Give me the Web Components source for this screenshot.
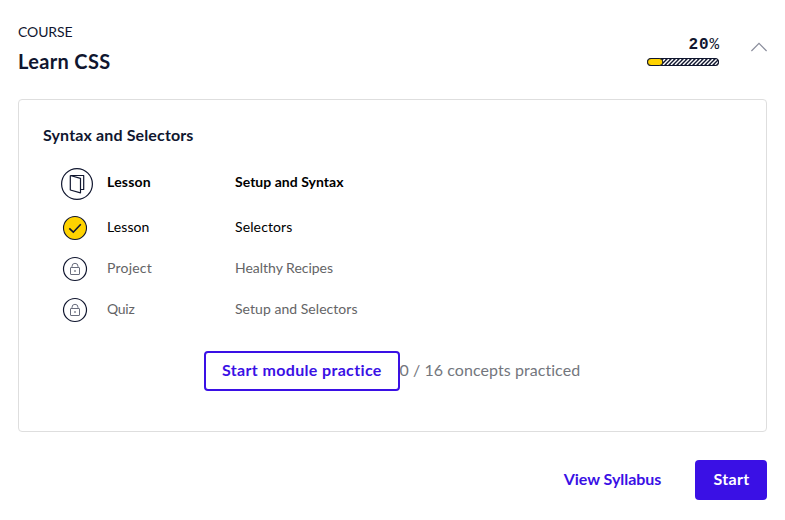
<!DOCTYPE html>
<html lang="en">
<head>
<meta charset="utf-8">
<title>Learn CSS</title>
<style>
body{margin:0;background:#fff;color:#10162f;font-family:Lato,"Open Sans",sans-serif}
</style>
</head>
<body>
<course-page></course-page>
<script>
const define = (name, html, setup) => customElements.define(name, class extends HTMLElement {
  connectedCallback() {
    if (this.shadowRoot) return;
    this.attachShadow({mode: 'open'}).innerHTML = html;
    if (setup) setup(this, this.shadowRoot);
  }
});

/* A single line of text whose tracking is spread over the measure in "w". */
define('fit-text', `<style>
:host{display:block;white-space:nowrap}
span{display:inline-block}
</style><span><slot></slot></span>`, (el, root) => {
  const span = root.querySelector('span');
  const width = Number(el.getAttribute('w'));
  const count = el.textContent.length;
  span.style.letterSpacing = (width - span.getBoundingClientRect().width) / count + 'px';
  el.style.width = width + 'px';
});

define('progress-meter', `<style>
:host{display:flex;flex-direction:column;align-items:flex-end;width:72px}
.value{font:700 16px/20px "Liberation Mono",monospace;padding-top:1px;margin:0 -1px 3px 0}
.value b{font-weight:400}
svg{display:block}
</style>
<div class="value"><fit-text w="31.5">20<b>%</b></fit-text></div>
<svg width="72" height="8" viewBox="0 0 72 8">
<defs><pattern id="hatch" width="4" height="6" patternUnits="userSpaceOnUse" y="1">
<rect width="4" height="6" fill="#10162f"/><path d="M-4 6L2 0M0 6L6 0M-8 6L-2 0M4 6L10 0" stroke="#fff" stroke-width="1.5"/></pattern></defs>
<rect x=".5" y=".5" width="71" height="7" rx="3.5" fill="url(#hatch)" stroke="#10162f" stroke-width="1.2"/>
<rect x=".5" y=".5" width="15.3" height="7" rx="3.5" fill="#ffd300" stroke="#10162f"/>
</svg>`);

define('status-icon', `<style>
:host{display:flex;justify-content:center;width:28px}
:host([kind=book]){width:32px}
svg{display:none;overflow:visible;fill:none;stroke:#10162f}
:host([kind=book]) .book,:host([kind=check]) .check,:host([kind=lock]) .lock{display:block}
</style>
<svg class="book" width="32" height="32"><circle cx="16" cy="16" r="15.4" stroke-width="1.2"/>
<path d="M9.3 7.5H22.7V21.5H19.6M9.3 7.5V22L19.5 24.8V10.3L9.3 7.5" stroke-width="1.2" stroke-linejoin="round"/></svg>
<svg class="check" width="24" height="24"><circle cx="12" cy="12" r="11.5" fill="#ffd300" stroke-width="1.1"/>
<path d="M6.3 12.4L10.3 16.2L17.8 8.2" stroke-width="1.6"/></svg>
<svg class="lock" width="24" height="24"><circle cx="12" cy="12" r="11.5" stroke-width="1.2"/>
<g stroke="#6a6e7e"><rect x="7.5" y="10.5" width="9" height="7" rx=".4"/><path d="M9 10.5V9.3A3 3 0 0 1 15 9.3V10.5"/><path d="M12 13.2V14.8" stroke-width="1.6"/></g></svg>`);

define('content-row', `<style>
:host{display:grid;grid-template-columns:46px 128px 1fr;height:41px;align-items:center;color:#000;font-size:14px;line-height:20px}
::slotted(fit-text){padding-bottom:2px}
:host([current]){height:48px;margin-bottom:-1px;font-weight:700}
:host([current]) ::slotted(fit-text){padding-bottom:4px}
:host([locked]){color:#646466}
</style><slot></slot>`);

define('action-button', `<style>
:host{display:flex;box-sizing:border-box;height:40px;align-items:center;justify-content:center;border:2px solid transparent;border-radius:4px;color:#3a10e5;font-size:16px;font-weight:700;line-height:24px;padding:0 0 2px 1px}
:host([outline]){border-color:#3a10e5}
:host([solid]){background:#3a10e5;color:#fff}
</style><slot></slot>`);

define('course-header', `<style>
:host{display:flex;justify-content:space-between;height:77px}
.course{font-size:14px;line-height:20px}
.name{font-size:20px;line-height:26px;font-weight:700;margin-top:6px}
.side{display:flex;gap:32px;padding-top:12px}
.side svg{margin-top:8px}
</style>
<div class="title"><div class="course"><fit-text w="54.5">COURSE</fit-text></div>
<div class="name"><fit-text w="92.5">Learn CSS</fit-text></div></div>
<div class="side"><progress-meter></progress-meter>
<svg width="16" height="10" viewBox="0 0 16 10" fill="none" stroke="#898c9b" stroke-width="1.2"><path d="M.4 9L8 1.4L15.6 9"/></svg></div>`);

define('module-card', `<style>
:host{display:block;box-sizing:border-box;height:333px;border:1px solid #dedede;border-radius:4px;padding:23px 24px}
.heading{font-size:16px;line-height:24px;font-weight:700}
.rows{padding:13px 0 0 18px}
.practice{display:flex;align-items:center;justify-content:center;margin-top:21px;padding-right:1px}
.practice action-button{width:196px}
.count{font-size:16px;line-height:24px;color:#73767d;padding-bottom:2px}
</style>
<div class="heading"><fit-text w="150.5">Syntax and Selectors</fit-text></div>
<div class="rows">
<content-row current><status-icon kind="book"></status-icon><fit-text w="44">Lesson</fit-text><fit-text w="108.5">Setup and Syntax</fit-text></content-row>
<content-row><status-icon kind="check"></status-icon><fit-text w="42.5">Lesson</fit-text><fit-text w="57.5">Selectors</fit-text></content-row>
<content-row locked><status-icon kind="lock"></status-icon><fit-text w="45">Project</fit-text><fit-text w="98">Healthy Recipes</fit-text></content-row>
<content-row locked><status-icon kind="lock"></status-icon><fit-text w="27.5">Quiz</fit-text><fit-text w="122.5">Setup and Selectors</fit-text></content-row>
</div>
<div class="practice"><action-button outline><fit-text w="160">Start module practice</fit-text></action-button><fit-text class="count" w="181">0 / 16 concepts practiced</fit-text></div>`);

define('course-page', `<style>
:host{display:block;box-sizing:border-box;width:785px;height:520px;padding:22px 18px 0;background:#fff}
footer{display:flex;justify-content:flex-end;gap:16px;margin-top:28px}
.view{width:134px}.start{width:72px}
</style>
<course-header></course-header>
<module-card></module-card>
<footer><action-button class="view"><fit-text w="97.5">View Syllabus</fit-text></action-button><action-button class="start" solid><fit-text w="36">Start</fit-text></action-button></footer>`);
</script>
</body>
</html>
